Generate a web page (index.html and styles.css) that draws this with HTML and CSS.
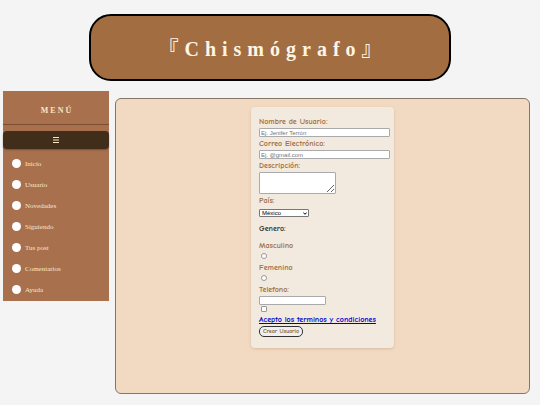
FILE: index.html
```html
<!DOCTYPE html>
<html lang="es">
<head>
<meta charset="utf-8">
<title>Chismógrafo</title>
<link rel="stylesheet" href="styles.css">
</head>
<body>
<header class="banner"><h1>『Chismógrafo』</h1></header>
<div class="layout">
  <nav class="sidebar" aria-labelledby="menu-title">
    <h2 class="menu-title" id="menu-title">MENÚ</h2>
    <button class="toggle" type="button" aria-label="Menú">
      <svg viewBox="0 0 6 6" width="6" height="6"><path d="M0 .5h6M0 3h6M0 5.5h6" stroke="#fae5c4" stroke-width="1"/></svg>
    </button>
    <ul class="menu">
      <li><a href="#">Inicio</a></li>
      <li><a href="#">Usuario</a></li>
      <li><a href="#">Novedades</a></li>
      <li><a href="#">Siguiendo</a></li>
      <li><a href="#">Tus post</a></li>
      <li><a href="#">Comentarios</a></li>
      <li><a href="#">Ayuda</a></li>
    </ul>
  </nav>
  <main class="content">
    <form class="card">
      <label for="nombre">Nombre de Usuario:</label>
      <input class="field wide" id="nombre" type="text" placeholder="Ej. Jenifer Terrón">
      <label for="correo">Correo Electrónico:</label>
      <input class="field wide" id="correo" type="email" placeholder="Ej. @gmail.com">
      <label for="descripcion">Descripción:</label>
      <textarea class="area" id="descripcion"></textarea>
      <label for="pais">País:</label>
      <div class="country-box">
        <select class="country" id="pais"><option>México</option></select>
        <svg class="chevron" viewBox="0 0 4 3" width="4" height="3"><path d="M.3.5 2 2.3 3.7.5" fill="none" stroke="#000"/></svg>
      </div>
      <p class="group">Genero:</p>
      <label for="masculino">Masculino</label>
      <input class="mark round" id="masculino" type="radio" name="genero">
      <label for="femenino">Femenino</label>
      <input class="mark round" id="femenino" type="radio" name="genero">
      <label for="telefono">Telefono:</label>
      <input class="field short" id="telefono" type="tel">
      <input class="mark" id="terminos" type="checkbox" aria-labelledby="terminos-link">
      <a class="terms" id="terminos-link" href="#">Acepto los terminos y condiciones</a>
      <button class="submit" type="button">Crear Usuario</button>
    </form>
  </main>
</div>
</body>
</html>
```
FILE: styles.css
```css
* {
  box-sizing: border-box;
}

body {
  margin: 0;
  background: #f4f4f4;
  font-family: "Liberation Serif", "Noto Sans CJK JP", serif;
}

.banner {
  width: 67%;
  margin: 14px auto 10px;
  padding: 22px 0 18px;
  border: 2px solid #000;
  border-radius: 22px;
  background: #a26e41;
  color: #fff5e6;
  text-align: center;
}

.banner h1 {
  margin: 0;
  padding-left: 6px;
  font-size: 20px;
  line-height: 23px;
  letter-spacing: 6px;
}

.layout {
  display: flex;
  align-items: flex-start;
  gap: 6px;
  padding: 0 10px 0 3px;
}

.sidebar {
  flex: 0 0 106px;
  padding-bottom: 1px;
  background: #a9704e;
}

.menu-title {
  margin: 0 0 6px;
  padding: 6px 0 0 2px;
  border-bottom: 1px solid #7b4d34;
  color: #fae5c4;
  font-size: 8px;
  line-height: 27px;
  letter-spacing: 2px;
  text-align: center;
}

.toggle {
  display: flex;
  align-items: center;
  justify-content: center;
  width: 100%;
  height: 18px;
  padding: 0;
  border: 0;
  border-radius: 4px;
  background: #402e1b;
  box-shadow: 0 1px 2px rgba(0, 0, 0, 0.3);
}

.menu {
  margin: 4px 0 0;
  padding: 0;
  list-style: none;
}

.menu a {
  display: flex;
  align-items: center;
  gap: 4px;
  height: 21px;
  padding-left: 9px;
  color: #fae5c4;
  font-size: 7px;
  text-decoration: none;
}

.menu a::before {
  content: "";
  width: 9px;
  height: 9px;
  border-radius: 50%;
  background: #fff;
}

.content {
  flex: 1;
  min-height: 296px;
  margin-top: 7px;
  padding: 8px;
  border: 1px solid #85766a;
  border-radius: 6px;
  background: #f2dac2;
}

.card {
  display: flex;
  flex-direction: column;
  align-items: flex-start;
  width: 143px;
  margin: 0 auto;
  padding: 8px 4px 11px 8px;
  border-radius: 4px;
  background: #f3eadf;
  box-shadow: 0 1px 3px rgba(120, 70, 30, 0.2);
  color: #a26e41;
  font-family: "Comic Neue", "Comic Sans MS", Lato, sans-serif;
  font-size: 8px;
  font-weight: 700;
  line-height: 13px;
}

.field,
.area,
.country {
  margin: 0;
  border: 1px solid #aaa;
  border-radius: 1px;
  background: #fff;
  color: #000;
  font-family: "Liberation Sans", sans-serif;
  font-size: 6px;
}

.field {
  height: 9px;
  padding: 0 1px;
}

.field::placeholder {
  color: #757575;
}

.wide {
  width: 100%;
}

.short {
  width: 67px;
}

.area {
  width: 77px;
  height: 22px;
}

.country-box {
  position: relative;
  display: flex;
  width: 50px;
  margin: 2px 0 5px;
}

.country {
  appearance: none;
  width: 100%;
  height: 8px;
  padding: 0 2px;
  border-color: #777;
  line-height: 6px;
}

.chevron {
  position: absolute;
  top: 3px;
  right: 2px;
  pointer-events: none;
}

.group {
  margin: 0 0 4px;
  color: #333;
}

.mark {
  appearance: none;
  width: 6px;
  height: 6px;
  margin: 1px 2px;
  border: 1px solid #999;
  border-radius: 1px;
  background: #fff;
}

.round {
  margin: 1px 2px 2px;
  border-radius: 50%;
}

.terms {
  color: #00c;
}

.submit {
  height: 11px;
  padding: 0 3px;
  border: 1px solid #333;
  border-radius: 5px;
  background: #efefef;
  color: #7d5b2f;
  font: inherit;
  font-size: 6px;
  line-height: 9px;
}
```
